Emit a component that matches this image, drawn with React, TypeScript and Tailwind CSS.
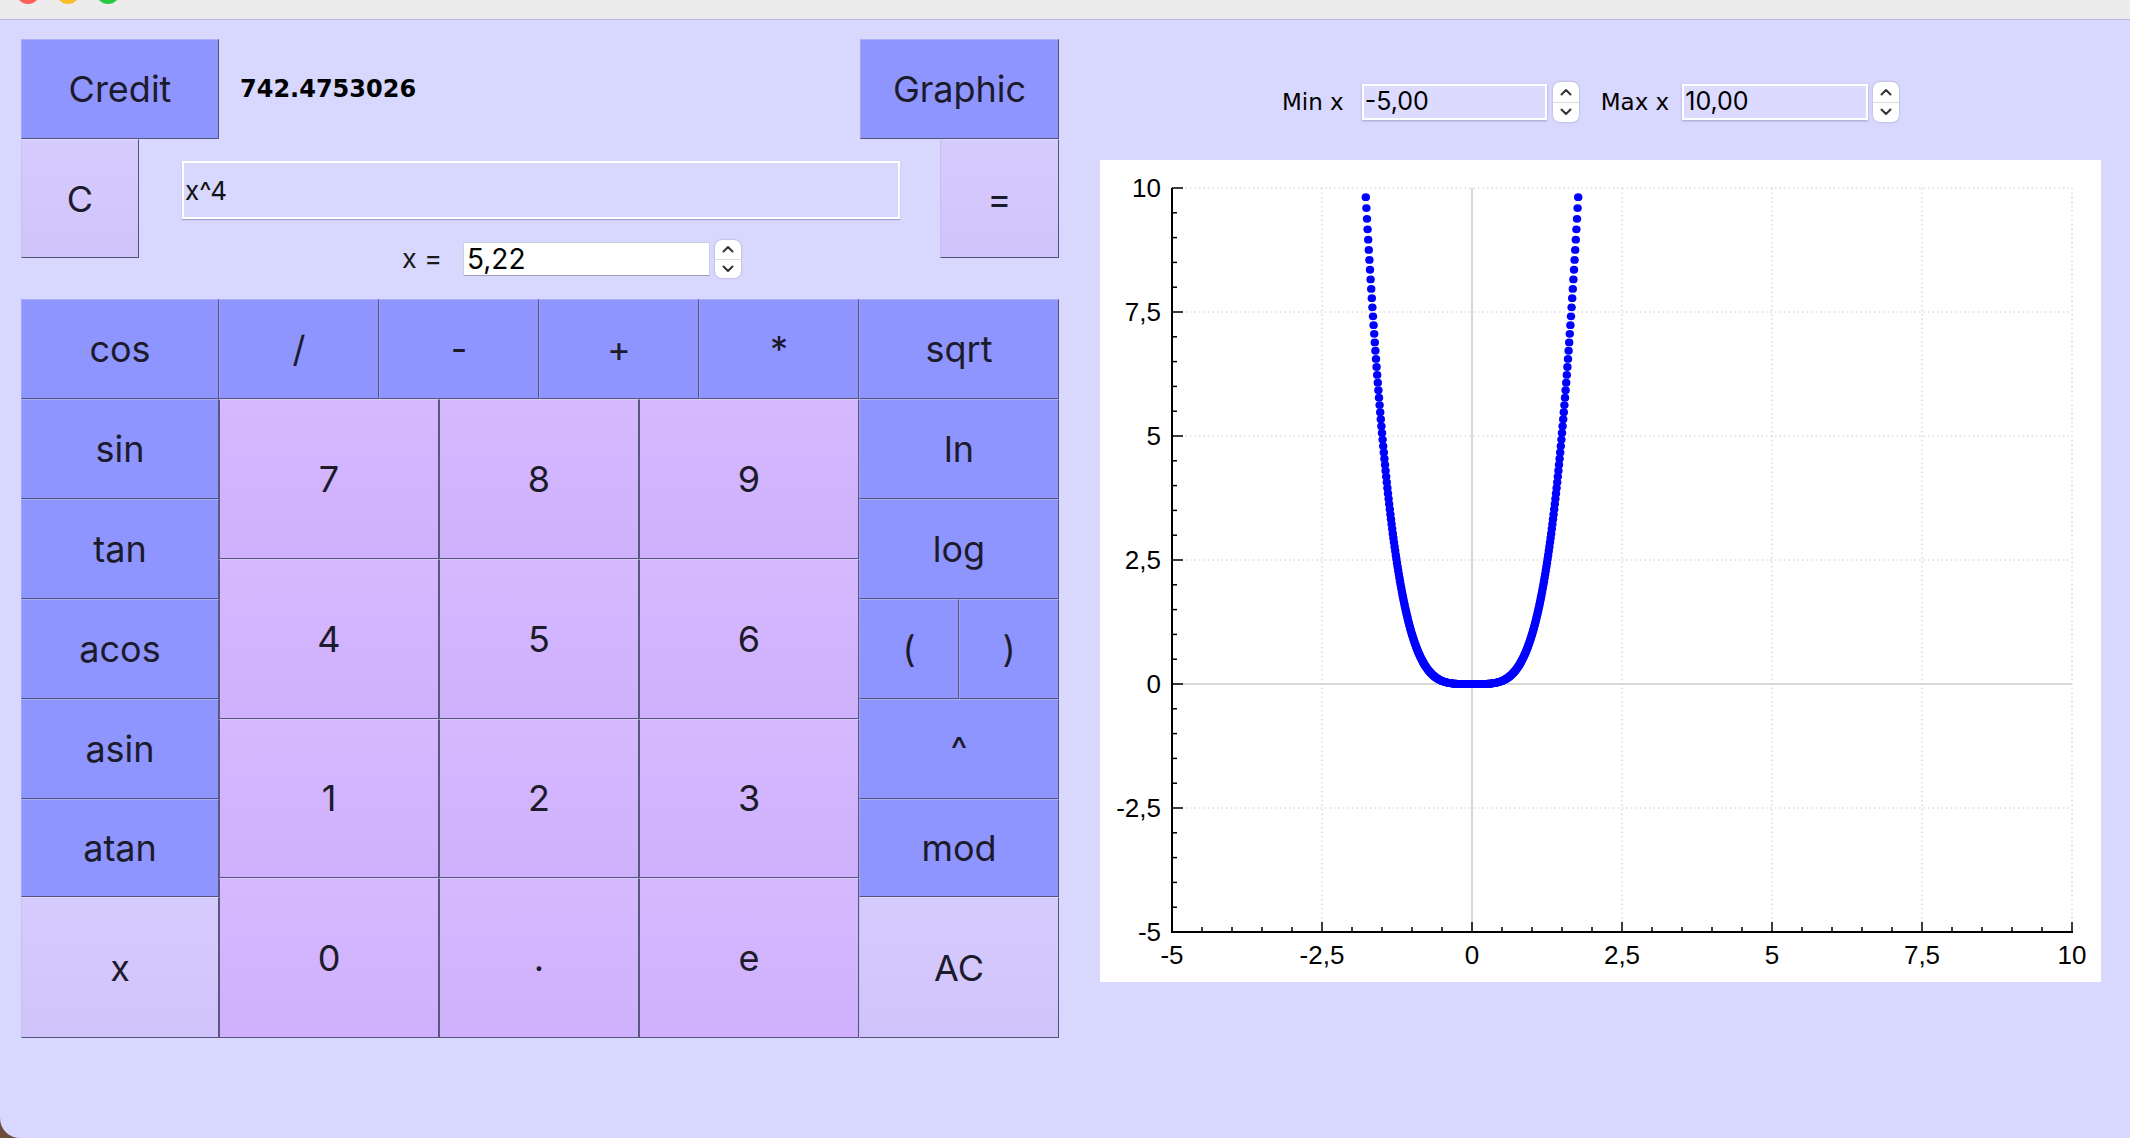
import React from "react";

type Tone = "blue" | "num" | "light";

const tones: Record<Tone, string> = {
  blue: "bg-[#8f95fe] border-t-[#a9aeff] border-l-[#a0a5f4]",
  num: "bg-linear-to-b from-[#d5b9fe] to-[#cfb0fc] border-t-[#dccaff] border-l-[#5e5a78]",
  light: "bg-linear-to-b from-[#d6cbfd] to-[#d0c3fb] border-t-[#e0d8ff] border-l-[#c8bff0]",
};

function Key({ label, tone, className = "" }: { label: string; tone: Tone; className?: string }) {
  return (
    <button
      className={`flex items-center justify-center border border-r-[#54547a] border-b-[#54547a] text-[36px] leading-none text-[#1c1b2c] ${tones[tone]} ${className}`}
    >
      {label}
    </button>
  );
}

function Spinner({ className = "" }: { className?: string }) {
  return (
    <div className={`w-[26px] rounded-[7px] bg-white shadow-[0_0_2px_rgba(0,0,0,0.3)] flex flex-col ${className}`}>
      <div className="flex-1 flex items-center justify-center border-b border-[#dcdcdc]">
        <svg width="12" height="8" viewBox="0 0 12 8">
          <polyline points="1.5,6.5 6,2 10.5,6.5" fill="none" stroke="#333" strokeWidth="2" strokeLinecap="round" strokeLinejoin="round" />
        </svg>
      </div>
      <div className="flex-1 flex items-center justify-center">
        <svg width="12" height="8" viewBox="0 0 12 8">
          <polyline points="1.5,1.5 6,6 10.5,1.5" fill="none" stroke="#333" strokeWidth="2" strokeLinecap="round" strokeLinejoin="round" />
        </svg>
      </div>
    </div>
  );
}

function Chart() {
  const sx = (v: number) => 72 + (v + 5) * 60;
  const sy = (v: number) => 28 + (10 - v) * 49.6;
  const majors = [-5, -2.5, 0, 2.5, 5, 7.5, 10];
  const grid = [-2.5, 2.5, 5, 7.5, 10];
  const minors = Array.from({ length: 31 }, (_, i) => -5 + i * 0.5);
  const fmt = (v: number) => String(v).replace(".", ",");

  // x^4 sampled every 0.01 over [-5, 10]
  const points: { x: number; y: number }[] = [];
  for (let i = 0; i <= 1500; i++) {
    const x = Math.round((-5 + i * 0.01) * 100) / 100;
    const y = x ** 4;
    if (y <= 10) points.push({ x, y });
  }

  return (
    <svg width="1001" height="822" className="block" fontFamily="'Liberation Sans', Arial, sans-serif">
      {/* dotted grid */}
      {grid.map(v => (
        <line key={"gx" + v} x1={sx(v)} x2={sx(v)} y1={sy(10)} y2={sy(-5)} stroke="#c6c6c6" strokeDasharray="1.5 3" />
      ))}
      {[10, 7.5, 5, 2.5, -2.5].map(v => (
        <line key={"gy" + v} x1={sx(-5)} x2={sx(10)} y1={sy(v)} y2={sy(v)} stroke="#c6c6c6" strokeDasharray="1.5 3" />
      ))}
      {/* zero lines */}
      <line x1={sx(0)} x2={sx(0)} y1={sy(10)} y2={sy(-5)} stroke="#cbcbcb" strokeWidth="1.5" />
      <line x1={sx(-5)} x2={sx(10)} y1={sy(0)} y2={sy(0)} stroke="#cbcbcb" strokeWidth="1.5" />

      {/* curve */}
      {points.map(p => (
        <ellipse key={p.x} cx={sx(p.x)} cy={sy(p.y)} rx="4.2" ry="3.9" fill="#0000ff" />
      ))}

      {/* axes */}
      <line x1={sx(-5)} x2={sx(-5)} y1={sy(10)} y2={sy(-5) + 1} stroke="#000" strokeWidth="2" />
      <line x1={sx(-5)} x2={sx(10) + 1} y1={sy(-5)} y2={sy(-5)} stroke="#000" strokeWidth="2" />
      {minors.map(v => {
        const major = v % 2.5 === 0;
        return (
          <g key={"t" + v}>
            <line x1={sx(-5)} x2={sx(-5) + (major ? 11 : 5)} y1={sy(v)} y2={sy(v)} stroke="#000" strokeWidth="1.5" />
            <line x1={sx(v)} x2={sx(v)} y1={sy(-5)} y2={sy(-5) - (major ? 10 : 5)} stroke="#000" strokeWidth="1.5" />
          </g>
        );
      })}

      {/* labels */}
      {majors.map(v => (
        <text key={"ly" + v} x={61} y={sy(v) + 9} textAnchor="end" fontSize="26" fill="#000">
          {fmt(v)}
        </text>
      ))}
      {majors.map(v => (
        <text key={"lx" + v} x={sx(v)} y={804} textAnchor="middle" fontSize="26" fill="#000">
          {fmt(v)}
        </text>
      ))}
    </svg>
  );
}

export default function App() {
  return (
    <div className="w-full h-[1138px] bg-[#6d4e3c] font-['Inter',sans-serif]">
      <div className="h-full bg-[#d8d7fe] rounded-bl-[20px] overflow-hidden flex flex-col">
        {/* title bar */}
        <div className="h-[20px] bg-[#ececed] border-b border-[#b7b7d6] flex items-start pl-[16px] gap-[16px] overflow-hidden">
          <div className="w-[24px] h-[24px] rounded-full bg-[#fe5f57] mt-[-20px] shrink-0" />
          <div className="w-[24px] h-[24px] rounded-full bg-[#febc2e] mt-[-20px] shrink-0" />
          <div className="w-[24px] h-[24px] rounded-full bg-[#28c840] mt-[-20px] shrink-0" />
        </div>

        <div className="flex pt-[19px] pl-[21px]">
          {/* calculator */}
          <div className="w-[1038px] flex flex-col">
            <div className="flex h-[100px]">
              <Key label="Credit" tone="blue" className="w-[198px]" />
              <div className="flex-1 flex items-center pl-[21px] font-['DejaVu_Sans',sans-serif] font-bold text-[24px] text-black">
                742.4753026
              </div>
              <Key label="Graphic" tone="blue" className="w-[199px]" />
            </div>

            <div className="flex items-start">
              <Key label="C" tone="light" className="w-[118px] h-[119px]" />
              <div className="flex-1 flex flex-col pt-[22px]">
                <input
                  readOnly
                  value="x^4"
                  className="ml-[43px] mr-[40px] h-[58px] border-2 border-white bg-transparent pl-[1px] text-[26px] text-[#111] shadow-[0_1px_1px_rgba(60,60,120,0.35)] outline-none"
                />
                <div className="flex items-center pl-[263px] mt-[21px] h-[38px]">
                  <span className="w-[61px] text-[27px] text-[#1a1a1a]">x =</span>
                  <input
                    readOnly
                    value="5,22"
                    className="w-[247px] h-[34px] bg-white border border-[#cfcfdc] border-b-[#9c9cb2] pl-[3px] text-[28px] text-black outline-none"
                  />
                  <Spinner className="ml-[5px] h-[38px]" />
                </div>
              </div>
              <Key label="=" tone="light" className="w-[119px] h-[119px]" />
            </div>

            {/* keypad */}
            <div className="flex mt-[21px] h-[739px]">
              <div className="w-[198px] flex flex-col">
                <Key label="cos" tone="blue" className="h-[100px]" />
                <Key label="sin" tone="blue" className="h-[100px]" />
                <Key label="tan" tone="blue" className="h-[100px]" />
                <Key label="acos" tone="blue" className="h-[100px]" />
                <Key label="asin" tone="blue" className="h-[100px]" />
                <Key label="atan" tone="blue" className="h-[98px]" />
                <Key label="x" tone="light" className="flex-1" />
              </div>

              <div className="w-[640px] flex flex-col">
                <div className="flex h-[100px]">
                  {["/", "-", "+", "*"].map(op => (
                    <Key key={op} label={op} tone="blue" className="flex-1" />
                  ))}
                </div>
                <div className="flex-1 grid grid-cols-[220px_200px_220px] grid-rows-4">
                  {["7", "8", "9", "4", "5", "6", "1", "2", "3", "0", ".", "e"].map(n => (
                    <Key key={n} label={n} tone="num" />
                  ))}
                </div>
              </div>

              <div className="w-[200px] flex flex-col">
                <Key label="sqrt" tone="blue" className="h-[100px]" />
                <Key label="ln" tone="blue" className="h-[100px]" />
                <Key label="log" tone="blue" className="h-[100px]" />
                <div className="flex h-[100px]">
                  <Key label="(" tone="blue" className="flex-1" />
                  <Key label=")" tone="blue" className="flex-1" />
                </div>
                <Key label="^" tone="blue" className="h-[100px]" />
                <Key label="mod" tone="blue" className="h-[98px]" />
                <Key label="AC" tone="light" className="flex-1" />
              </div>
            </div>
          </div>

          {/* graph */}
          <div className="w-[1001px] ml-[41px] flex flex-col">
            <div className="flex items-center h-[40px] mt-[43px] pl-[182px]">
              <span className="text-[23px] text-black font-['DejaVu_Sans',sans-serif] whitespace-nowrap">Min x</span>
              <input
                readOnly
                value="-5,00"
                className="ml-[18px] w-[185px] h-[36px] bg-[#dcdbff] border-2 border-white pl-[1px] text-[25px] text-black shadow-[0_1px_2px_rgba(60,60,120,0.35)] outline-none"
              />
              <Spinner className="ml-[6px] h-[40px]" />
              <span className="ml-[22px] text-[23px] text-black font-['DejaVu_Sans',sans-serif] whitespace-nowrap">Max x</span>
              <input
                readOnly
                value="10,00"
                className="ml-[13px] w-[186px] h-[36px] bg-[#dcdbff] border-2 border-white pl-[1px] text-[25px] text-black shadow-[0_1px_2px_rgba(60,60,120,0.35)] outline-none"
              />
              <Spinner className="ml-[5px] h-[40px]" />
            </div>
            <div className="mt-[38px] h-[822px] bg-white">
              <Chart />
            </div>
          </div>
        </div>
      </div>
    </div>
  );
}
